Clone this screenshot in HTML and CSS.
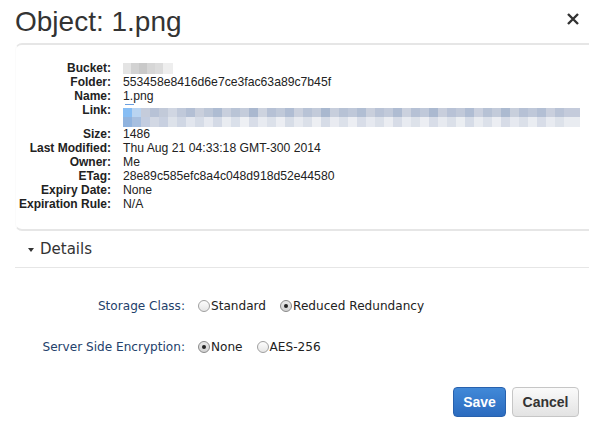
FILE: index.html
```html
<!DOCTYPE html>
<html>
<head>
<meta charset="utf-8">
<link rel="stylesheet" href="styles.css">
</head>
<body>
<div class="modal">
  <div class="header">
    <h1 class="title">Object: 1.png</h1>
    <button class="close" aria-label="Close">
      <svg width="14" height="14" viewBox="0 0 14 14"><path d="M2 2 L12 12 M12 2 L2 12" stroke="#333" stroke-width="2.4" stroke-linecap="butt"/></svg>
    </button>
  </div>
  <div class="info">
    <div class="grid">
      <div class="lbl">Bucket:</div><div class="val"><span class="blur-bucket"></span></div>
      <div class="lbl">Folder:</div><div class="val">553458e8416d6e7ce3fac63a89c7b45f</div>
      <div class="lbl">Name:</div><div class="val">1.png</div>
      <div class="lbl">Link:</div><div class="val link"><span class="blur-line"></span><span class="blur-row row1"></span><span class="blur-row row2"></span></div>
      <div class="lbl">Size:</div><div class="val">1486</div>
      <div class="lbl">Last Modified:</div><div class="val">Thu Aug 21 04:33:18 GMT-300 2014</div>
      <div class="lbl">Owner:</div><div class="val">Me</div>
      <div class="lbl">ETag:</div><div class="val">28e89c585efc8a4c048d918d52e44580</div>
      <div class="lbl">Expiry Date:</div><div class="val">None</div>
      <div class="lbl">Expiration Rule:</div><div class="val">N/A</div>
    </div>
  </div>
  <div class="details-head"><span class="caret"></span><span class="details-text">Details</span></div>
  <div class="form">
    <div class="frow">
      <div class="flabel">Storage Class:</div>
      <div class="opts">
        <label class="opt"><span class="radio"></span>Standard</label>
        <label class="opt"><span class="radio checked"></span>Reduced Redundancy</label>
      </div>
    </div>
    <div class="frow">
      <div class="flabel">Server Side Encryption:</div>
      <div class="opts">
        <label class="opt"><span class="radio checked"></span>None</label>
        <label class="opt"><span class="radio"></span>AES-256</label>
      </div>
    </div>
  </div>
  <div class="footer">
    <button class="btn save">Save</button>
    <button class="btn cancel">Cancel</button>
  </div>
</div>
</body>
</html>
```
FILE: styles.css
```css
html, body { margin: 0; padding: 0; background: #fff; }
body { width: 589px; height: 423px; overflow: hidden; font-family: "Liberation Sans", Arial, sans-serif; color: #333; }
.modal { padding-left: 15px; }
.header { display: flex; align-items: center; justify-content: space-between; height: 43px; padding-right: 9px; }
.title { margin: 0; font-size: 28px; font-weight: normal; color: #333; line-height: 36px; margin-top: 0; letter-spacing: 0; }
.close { border: 0; background: none; padding: 0; width: 14px; height: 14px; margin-top: -6px; display: flex; }
.info { border-top: 2px solid #e6e6e6; border-bottom: 2px solid #e6e6e6; border-left: 1px solid #fbfbfb; border-radius: 7px 0 0 7px; padding: 16px 0 18px 0; }
.grid { display: grid; grid-template-columns: 95px 1fr; column-gap: 12px; font-size: 12px; line-height: 14px; color: #222; }
.lbl { font-weight: bold; text-align: right; }
.val { white-space: nowrap; font-size: 12.2px; }
.blur-bucket { display: inline-block; width: 50px; height: 11px; margin-top: 2px; vertical-align: top; background: linear-gradient(90deg, #e4e4e4 0 8px, #d2d2d2 8px 16px, #c9c9c9 16px 24px, #d6d6d6 24px 32px, #dcdcdc 32px 40px, #eeeeee 40px 50px); }
.link { display: flex; flex-direction: column; height: 24px; padding-top: 1px; box-sizing: border-box; }
.blur-line { display: block; width: 9px; height: 1px; background: #6a9fe0; margin-left: 2px; margin-bottom: 3px; }
.blur-row { display: block; height: 9px; width: 457px; }
.row1 { background: linear-gradient(90deg, #86bdf4 0 9px, #b9d4f1 9px 18px, #c5ccdb 18px 27px, #b7c2d6 27px 36px, #c2cad9 36px 45px, #d0d6e2 45px 54px, #c0c9da 54px 63px, #b3bfd4 63px 72px, #c9cfdc 72px 81px, #bcc6d7 81px 90px, #aebcd2 90px 99px, #c8cfdd 99px 108px, #b9c4d6 108px 117px, #c4ccdb 117px 126px, #aab8cf 126px 135px, #cdd3df 135px 144px, #b6c1d5 144px 153px, #c0c9d9 153px 162px, #b0bdd3 162px 171px, #cad0dd 171px 180px, #b8c3d6 180px 189px, #c3cbda 189px 198px, #a9b8cf 198px 207px, #c7cedc 207px 216px, #b7c2d5 216px 225px, #bfc8d9 225px 234px, #b1bed3 234px 243px, #c9cfdc 243px 252px, #b9c3d6 252px 261px, #c2cada 261px 270px, #afbcd2 270px 279px, #cbd1de 279px 288px, #b6c1d5 288px 297px, #c0c9da 297px 306px, #abb9d0 306px 315px, #c8cedc 315px 324px, #b8c2d6 324px 333px, #c1c9d9 333px 342px, #b0bdd3 342px 351px, #cad0de 351px 360px, #b7c2d5 360px 369px, #c3cbda 369px 378px, #acbad0 378px 387px, #c8cfdc 387px 396px, #b6c1d5 396px 405px, #bfc8d9 405px 414px, #b3bfd4 414px 423px, #c9cfdd 423px 432px, #b9c3d6 432px 441px, #c4cbdb 441px 457px); }
.row2 { height: 10px; background: linear-gradient(90deg, #90b3de 0 9px, #a7bfdf 9px 18px, #c3cde0 18px 27px, #d2d8e4 27px 36px, #c8d0e0 36px 45px, #dde2ea 45px 54px, #d0d7e4 54px 63px, #e2e6ee 63px 72px, #d6dce7 72px 81px, #e6e9f0 81px 90px, #d4dae6 90px 99px, #e9ecf1 99px 108px, #dae0ea 108px 117px, #eef0f4 117px 126px, #d8dde8 126px 135px, #e8ebf1 135px 144px, #dce1ea 144px 153px, #eceef3 153px 162px, #d7dde7 162px 171px, #e7eaf0 171px 180px, #dbe0e9 180px 189px, #edeff3 189px 198px, #d6dce7 198px 207px, #e9ebf1 207px 216px, #dce1ea 216px 225px, #eceef3 225px 234px, #d8dde8 234px 243px, #e6e9f0 243px 252px, #dbe0e9 252px 261px, #ebedf2 261px 270px, #d7dce7 270px 279px, #e8ebf1 279px 288px, #dde2ea 288px 297px, #eceef3 297px 306px, #d8dde8 306px 315px, #e7eaf0 315px 324px, #dbe0e9 324px 333px, #ebeef2 333px 342px, #d6dce7 342px 351px, #e9ecf1 351px 360px, #dce1ea 360px 369px, #eceef3 369px 378px, #d7dce7 378px 387px, #e6e9f0 387px 396px, #dbe0e9 396px 405px, #eaedf2 405px 414px, #d8dde8 414px 423px, #e8ebf1 423px 432px, #dde2ea 432px 441px, #e9ecf1 441px 457px); }
.details-head { display: flex; align-items: center; height: 36px; border-bottom: 1px solid #e6e6e6; padding-left: 13px; }
.caret { width: 0; height: 0; border-left: 3.5px solid transparent; border-right: 3.5px solid transparent; border-top: 4px solid #333; margin-right: 6px; margin-top: 1px; }
.details-text { font-family: "DejaVu Sans", Verdana, sans-serif; font-size: 15px; color: #333; }
.form { padding-top: 30px; font-family: "DejaVu Sans", Verdana, sans-serif; font-size: 12.1px; }
.frow { display: flex; align-items: center; height: 16px; margin-bottom: 25px; }
.frow:last-child { margin-bottom: 0; }
.flabel { width: 170px; text-align: right; color: #23416b; padding-right: 13px; }
.opts { display: flex; gap: 14px; color: #222; }
.opt { display: flex; align-items: center; }
.radio { width: 12px; height: 12px; border: 1px solid #a0a0a0; border-radius: 50%; background: linear-gradient(#fdfdfd, #e6e6e6); box-sizing: border-box; margin-right: 1px; display: flex; align-items: center; justify-content: center; }
.radio.checked { border-color: #8a8a8a; background: linear-gradient(#e8e8e8, #d2d2d2); }
.radio.checked::after { content: ""; width: 4px; height: 4px; border-radius: 50%; background: #222; }
.footer { display: flex; justify-content: flex-end; gap: 6px; padding-right: 10px; margin-top: 32px; }
.btn { height: 30px; border-radius: 4px; font-family: "Liberation Sans", Arial, sans-serif; font-weight: bold; font-size: 14px; padding: 0; }
.save { width: 53px; color: #fff; background: linear-gradient(#4189d8, #2b6bbf); border: 1px solid #2861ad; }
.cancel { width: 67px; color: #333; background: linear-gradient(#fafafa, #e3e3e3); border: 1px solid #c6c6c6; }
```
